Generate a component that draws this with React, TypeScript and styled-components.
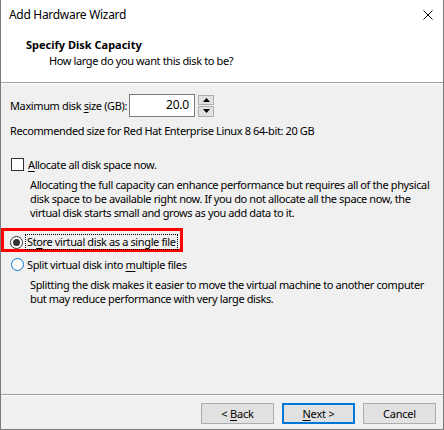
import React from "react";
import styled, { createGlobalStyle } from "styled-components";

const Global = createGlobalStyle`
  html, body { margin: 0; padding: 0; background: #ffffff; }
  * { box-sizing: border-box; }
`;

const FONT = `"Noto Sans", "Liberation Sans", Arial, sans-serif`;

const Window = styled.div`
  width: 444px;
  height: 430px;
  display: flex;
  flex-direction: column;
  background: #f0f0f0;
  border-left: 1px solid #7a7a7a;
  border-right: 1px solid #7a7a7a;
  border-bottom: 1px solid #7a7a7a;
  font-family: ${FONT};
  font-size: 11px;
  letter-spacing: -0.38px;
  white-space: nowrap;
  color: #000;
  overflow: hidden;
`;

const TitleBar = styled.div`
  height: 31px;
  background: #fff;
  display: flex;
  align-items: center;
  justify-content: space-between;
  padding: 0 10px 2px 8px;
`;

const TitleText = styled.span`
  font-size: 12px;
  letter-spacing: -0.3px;
  color: #000;
`;

const Header = styled.div`
  height: 51px;
  background: #fff;
  padding: 6px 0 0 25px;
  display: flex;
  flex-direction: column;
`;

const HeaderTitle = styled.div`
  font-weight: bold;
  font-size: 11px;
  letter-spacing: 0;
  line-height: 15px;
`;

const HeaderSub = styled.div`
  padding-left: 23px;
  line-height: 15px;
  margin-top: 1px;
`;

const Divider = styled.div`
  height: 2px;
  border-top: 1px solid #a0a0a0;
  border-bottom: 1px solid #ffffff;
`;

const Body = styled.div`
  flex: 1;
  padding: 10px 9px 0 9px;
  display: flex;
  flex-direction: column;
`;

const SizeRow = styled.div`
  display: flex;
  align-items: center;
  height: 23px;
`;

const SizeLabel = styled.span`
  width: 119px;
`;

const NumberBox = styled.div`
  width: 66px;
  height: 23px;
  background: #fff;
  border: 1px solid #7a7a7a;
  text-align: right;
  padding: 2px 5px 0 0;
  line-height: 16px;
  font-size: 12px;
  letter-spacing: -0.2px;
`;

const Spinner = styled.div`
  margin-left: 3px;
  width: 16px;
  height: 22px;
  display: flex;
  flex-direction: column;
  gap: 1px;
`;

const SpinButton = styled.div`
  flex: 1;
  background: #e1e1e1;
  border: 1px solid #adadad;
  display: flex;
  align-items: center;
  justify-content: center;
`;

const Line = styled.div<{ $mt?: number; $indent?: number }>`
  margin-top: ${(p) => p.$mt ?? 0}px;
  padding-left: ${(p) => p.$indent ?? 0}px;
  line-height: 14px;
`;

const OptionRow = styled.div<{ $mt?: number }>`
  display: flex;
  align-items: center;
  margin-top: ${(p) => p.$mt ?? 0}px;
  height: 15px;
`;

const CheckBox = styled.span`
  width: 13px;
  height: 13px;
  border: 1px solid #333;
  background: #fff;
  margin: 0 4px 0 1px;
  flex: none;
`;

const Radio = styled.span<{ $checked?: boolean; $hover?: boolean }>`
  width: 13px;
  height: 13px;
  border-radius: 50%;
  border: 1px solid ${(p) => (p.$hover ? "#0078d7" : "#333")};
  background: #fff;
  margin: 0 3px 0 1px;
  flex: none;
  display: flex;
  align-items: center;
  justify-content: center;
  &::after {
    content: "";
    display: ${(p) => (p.$checked ? "block" : "none")};
    width: 7px;
    height: 7px;
    border-radius: 50%;
    background: #333;
  }
`;

const Highlight = styled.div`
  margin: 8px 0 0 -9px;
  width: 182px;
  height: 24px;
  border: 3px solid #ff0000;
  display: flex;
  align-items: center;
  padding: 4px 0 0 5px;
`;

const FocusLabel = styled.span`
  outline: 1px dotted #000;
  outline-offset: 0;
  padding: 0 1px;
  line-height: 14px;
`;

const U = styled.span`
  text-decoration: underline;
  text-underline-offset: 2px;
`;

const Footer = styled.div`
  height: 35px;
  border-top: 1px solid #a0a0a0;
  box-shadow: inset 0 1px 0 #ffffff;
  display: flex;
  justify-content: flex-end;
  align-items: flex-start;
  gap: 8px;
  padding: 8px 7px 0 0;
`;

const Button = styled.button<{ $default?: boolean }>`
  width: 73px;
  height: 21px;
  background: #e1e1e1;
  border: ${(p) => (p.$default ? "2px solid #0078d7" : "1px solid #adadad")};
  font-family: ${FONT};
  font-size: 11px;
  letter-spacing: -0.2px;
  color: #000;
  padding: 0;
  line-height: 15px;
`;

const Tri = ({ up }: { up?: boolean }) => (
  <svg width="7" height="4" viewBox="0 0 7 4">
    <path d={up ? "M0 4 L3.5 0 L7 4 Z" : "M0 0 L3.5 4 L7 0 Z"} fill="#000" />
  </svg>
);

export default function App() {
  return (
    <>
      <Global />
      <Window>
        <TitleBar>
          <TitleText>Add Hardware Wizard</TitleText>
          <svg width="10" height="10" viewBox="0 0 10 10">
            <path d="M0.5 0.5 L9.5 9.5 M9.5 0.5 L0.5 9.5" stroke="#000" strokeWidth="1" />
          </svg>
        </TitleBar>
        <Header>
          <HeaderTitle>Specify Disk Capacity</HeaderTitle>
          <HeaderSub>How large do you want this disk to be?</HeaderSub>
        </Header>
        <Divider />
        <Body>
          <SizeRow>
            <SizeLabel>
              Maximum disk <U>s</U>ize (GB):
            </SizeLabel>
            <NumberBox>20.0</NumberBox>
            <Spinner>
              <SpinButton>
                <Tri up />
              </SpinButton>
              <SpinButton>
                <Tri />
              </SpinButton>
            </Spinner>
          </SizeRow>
          <Line $mt={7}>Recommended size for Red Hat Enterprise Linux 8 64-bit: 20 GB</Line>
          <OptionRow $mt={19}>
            <CheckBox />
            <span>
              <U>A</U>llocate all disk space now.
            </span>
          </OptionRow>
          <Line $mt={6} $indent={20}>
            Allocating the full capacity can enhance performance but requires all of the physical
            <br />
            disk space to be available right now. If you do not allocate all the space now, the
            <br />
            virtual disk starts small and grows as you add data to it.
          </Line>
          <Highlight>
            <Radio $checked />
            <FocusLabel>
              St<U>o</U>re virtual disk as a single file
            </FocusLabel>
          </Highlight>
          <OptionRow $mt={5}>
            <Radio $hover />
            <span>
              Split virtual disk into <U>m</U>ultiple files
            </span>
          </OptionRow>
          <Line $mt={6} $indent={20}>
            Splitting the disk makes it easier to move the virtual machine to another computer
            <br />
            but may reduce performance with very large disks.
          </Line>
        </Body>
        <Footer>
          <Button>
            &lt; <U>B</U>ack
          </Button>
          <Button $default>
            <U>N</U>ext &gt;
          </Button>
          <Button>Cancel</Button>
        </Footer>
      </Window>
    </>
  );
}
